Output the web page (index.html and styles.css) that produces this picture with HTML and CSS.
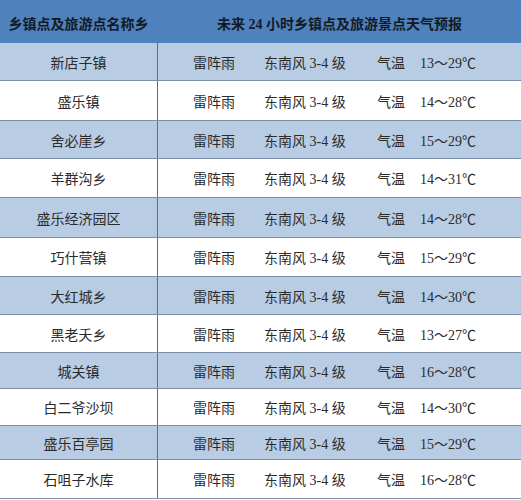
FILE: index.html
```html
<!DOCTYPE html>
<html lang="zh-CN">
<head>
<meta charset="utf-8">
<title>天气预报</title>
<link rel="stylesheet" href="styles.css">
</head>
<body>
<div class="table">
  <div class="head">
    <div class="c1">乡镇点及旅游点名称乡</div>
    <div class="c2">未来 24 小时乡镇点及旅游景点天气预报</div>
  </div>
  <div class="row alt"><div class="c1">新店子镇</div><div class="c2"><span class="w">雷阵雨</span><span class="wind">东南风 3-4 级</span><span class="lbl">气温</span><span>13～29℃</span></div></div>
  <div class="row"><div class="c1">盛乐镇</div><div class="c2"><span class="w">雷阵雨</span><span class="wind">东南风 3-4 级</span><span class="lbl">气温</span><span>14～28℃</span></div></div>
  <div class="row alt"><div class="c1">舍必崖乡</div><div class="c2"><span class="w">雷阵雨</span><span class="wind">东南风 3-4 级</span><span class="lbl">气温</span><span>15～29℃</span></div></div>
  <div class="row"><div class="c1">羊群沟乡</div><div class="c2"><span class="w">雷阵雨</span><span class="wind">东南风 3-4 级</span><span class="lbl">气温</span><span>14～31℃</span></div></div>
  <div class="row alt"><div class="c1">盛乐经济园区</div><div class="c2"><span class="w">雷阵雨</span><span class="wind">东南风 3-4 级</span><span class="lbl">气温</span><span>14～28℃</span></div></div>
  <div class="row"><div class="c1">巧什营镇</div><div class="c2"><span class="w">雷阵雨</span><span class="wind">东南风 3-4 级</span><span class="lbl">气温</span><span>15～29℃</span></div></div>
  <div class="row alt"><div class="c1">大红城乡</div><div class="c2"><span class="w">雷阵雨</span><span class="wind">东南风 3-4 级</span><span class="lbl">气温</span><span>14～30℃</span></div></div>
  <div class="row"><div class="c1">黑老夭乡</div><div class="c2"><span class="w">雷阵雨</span><span class="wind">东南风 3-4 级</span><span class="lbl">气温</span><span>13～27℃</span></div></div>
  <div class="row alt"><div class="c1">城关镇</div><div class="c2"><span class="w">雷阵雨</span><span class="wind">东南风 3-4 级</span><span class="lbl">气温</span><span>16～28℃</span></div></div>
  <div class="row"><div class="c1">白二爷沙坝</div><div class="c2"><span class="w">雷阵雨</span><span class="wind">东南风 3-4 级</span><span class="lbl">气温</span><span>14～30℃</span></div></div>
  <div class="row alt"><div class="c1">盛乐百亭园</div><div class="c2"><span class="w">雷阵雨</span><span class="wind">东南风 3-4 级</span><span class="lbl">气温</span><span>15～29℃</span></div></div>
  <div class="row"><div class="c1">石咀子水库</div><div class="c2"><span class="w">雷阵雨</span><span class="wind">东南风 3-4 级</span><span class="lbl">气温</span><span>16～28℃</span></div></div>
</div>
</body>
</html>
```
FILE: styles.css
```css
html, body {
  margin: 0;
  padding: 0;
  background: #ffffff;
}
.table {
  width: 521px;
  font-family: "Liberation Serif", "Noto Sans CJK SC", serif;
  font-size: 14px;
  color: #2b2b2b;
}
.head {
  display: flex;
  height: 43px;
  background: #4f81bd;
  color: #141a24;
  font-weight: bold;
  align-items: center;
}
.head .c1 {
  width: 157px;
  text-align: center;
  padding-top: 2px;
}
.head .c2 {
  flex: 1;
  text-align: center;
  padding-top: 2px;
  padding-left: 1px;
}
.row {
  display: flex;
  box-sizing: border-box;
  height: 38px;
  border-bottom: 1px solid #7d8ea8;
  background: #ffffff;
}
.row.alt {
  background: #b8cce4;
}
.row:nth-child(3) { height: 40px; }
.row:nth-child(5) { height: 39px; }
.row:nth-child(6) { height: 40px; }
.row:nth-child(7) { height: 39px; }
.row:nth-child(10) { height: 36px; }
.row:nth-child(11) { height: 37px; }
.row:nth-child(12) { height: 34px; }
.row:nth-child(13) { height: 39px; }
.row .c1 {
  box-sizing: border-box;
  width: 158px;
  border-right: 1px solid #52709e;
  display: flex;
  align-items: center;
  justify-content: center;
}
.row .c2 {
  flex: 1;
  display: flex;
  align-items: center;
  padding-left: 35px;
  white-space: nowrap;
}
.w { width: 71px; }
.wind { width: 113px; }
.lbl { width: 43px; }
```
